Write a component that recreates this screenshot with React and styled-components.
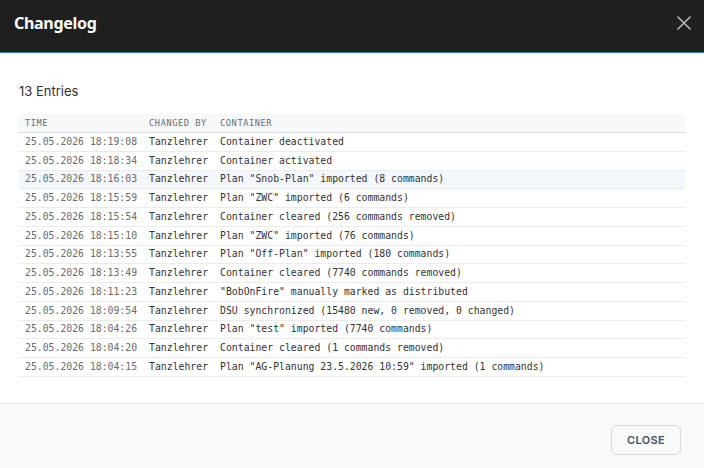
import styled, { createGlobalStyle } from 'styled-components'

const GlobalStyle = createGlobalStyle`
	html, body {
		margin: 0;
		padding: 0;
		background: #ffffff;
	}
	body {
		font-family: Inter, "Liberation Sans", sans-serif;
	}
`

const Modal = styled.div`
	display: flex;
	flex-direction: column;
	width: 704px;
	height: 468px;
	background: #ffffff;
	overflow: hidden;
`

const Header = styled.header`
	display: flex;
	align-items: center;
	justify-content: space-between;
	height: 53px;
	padding: 0 8px 0 14px;
	box-sizing: border-box;
	background: #1f1f1f;
	border-bottom: 1px solid #3b7ad9;
	flex-shrink: 0;
`

const Title = styled.h1`
	margin: 0;
	margin-top: -7px;
	color: #ffffff;
	font-family: "Noto Sans", sans-serif;
	font-size: 16px;
	font-weight: 700;
	letter-spacing: -0.3px;
`

const CloseIcon = styled.button`
	display: flex;
	align-items: center;
	justify-content: center;
	width: 24px;
	height: 24px;
	margin-top: -6px;
	padding: 0;
	border: none;
	background: transparent;
	color: #b5b5b5;
	cursor: pointer;
`

const Body = styled.main`
	flex: 1;
	padding: 30px 19px 0 19px;
`

const Count = styled.div`
	font-size: 13px;
	color: #333;
	line-height: 16px;
	margin-bottom: 15px;
`

const Table = styled.table`
	width: 100%;
	border-collapse: collapse;
	font-family: "DejaVu Sans Mono", "Liberation Mono", monospace;
	font-size: 9.8px;
`

const Th = styled.th`
	height: 18px;
	padding: 0 6px;
	text-align: left;
	font-size: 8.6px;
	font-weight: 400;
	letter-spacing: 0.6px;
	color: #666c75;
	background: #f6f8fa;
	border-bottom: 1px solid #d7dee6;
	white-space: nowrap;
`

const Row = styled.tr`
	background: ${(p) => (p.$active ? '#f4f7fb' : 'transparent')};
`

const Td = styled.td`
	height: 17.75px;
	padding: 0 6px;
	line-height: 12px;
	color: ${(p) => (p.$muted ? '#6b6b6b' : '#333')};
	border-bottom: 1px solid #ececec;
	white-space: nowrap;
	width: ${(p) => (p.$grow ? '100%' : 'auto')};
`

const Footer = styled.footer`
	display: flex;
	justify-content: flex-end;
	align-items: flex-start;
	height: 65px;
	padding: 21px 23px 0;
	box-sizing: border-box;
	background: #f8f9fa;
	border-top: 1px solid #e6e8eb;
	flex-shrink: 0;
`

const CloseButton = styled.button`
	width: 70px;
	height: 30px;
	border: 1px solid #d3dbe3;
	border-radius: 6px;
	background: #f8f9fa;
	color: #48505a;
	font-family: Inter, sans-serif;
	font-size: 11px;
	font-weight: 600;
	letter-spacing: 0.3px;
	cursor: pointer;
`

const entries = [
	['25.05.2026 18:19:08', 'Container deactivated'],
	['25.05.2026 18:18:34', 'Container activated'],
	['25.05.2026 18:16:03', 'Plan "Snob-Plan" imported (8 commands)'],
	['25.05.2026 18:15:59', 'Plan "ZWC" imported (6 commands)'],
	['25.05.2026 18:15:54', 'Container cleared (256 commands removed)'],
	['25.05.2026 18:15:10', 'Plan "ZWC" imported (76 commands)'],
	['25.05.2026 18:13:55', 'Plan "Off-Plan" imported (180 commands)'],
	['25.05.2026 18:13:49', 'Container cleared (7740 commands removed)'],
	['25.05.2026 18:11:23', '"BobOnFire" manually marked as distributed'],
	['25.05.2026 18:09:54', 'DSU synchronized (15480 new, 0 removed, 0 changed)'],
	['25.05.2026 18:04:26', 'Plan "test" imported (7740 commands)'],
	['25.05.2026 18:04:20', 'Container cleared (1 commands removed)'],
	['25.05.2026 18:04:15', 'Plan "AG-Planung 23.5.2026 10:59" imported (1 commands)'],
]

export default function App() {
	return (
		<Modal>
			<GlobalStyle />

			<Header>
				<Title>Changelog</Title>
				<CloseIcon aria-label='Close'>
					<svg width='16' height='16' viewBox='0 0 16 16' fill='none' stroke='currentColor' strokeWidth='1.6'>
						<path d='M1.5 1.5 L14.5 14.5 M14.5 1.5 L1.5 14.5' />
					</svg>
				</CloseIcon>
			</Header>

			<Body>
				<Count>{entries.length} Entries</Count>

				<Table>
					<thead>
						<tr>
							<Th>TIME</Th>
							<Th>CHANGED BY</Th>
							<Th>CONTAINER</Th>
						</tr>
					</thead>
					<tbody>
						{entries.map(([time, text], i) => (
							<Row key={time} $active={i === 2}>
								<Td $muted>{time}</Td>
								<Td>Tanzlehrer</Td>
								<Td $grow>{text}</Td>
							</Row>
						))}
					</tbody>
				</Table>
			</Body>

			<Footer>
				<CloseButton>CLOSE</CloseButton>
			</Footer>
		</Modal>
	)
}
